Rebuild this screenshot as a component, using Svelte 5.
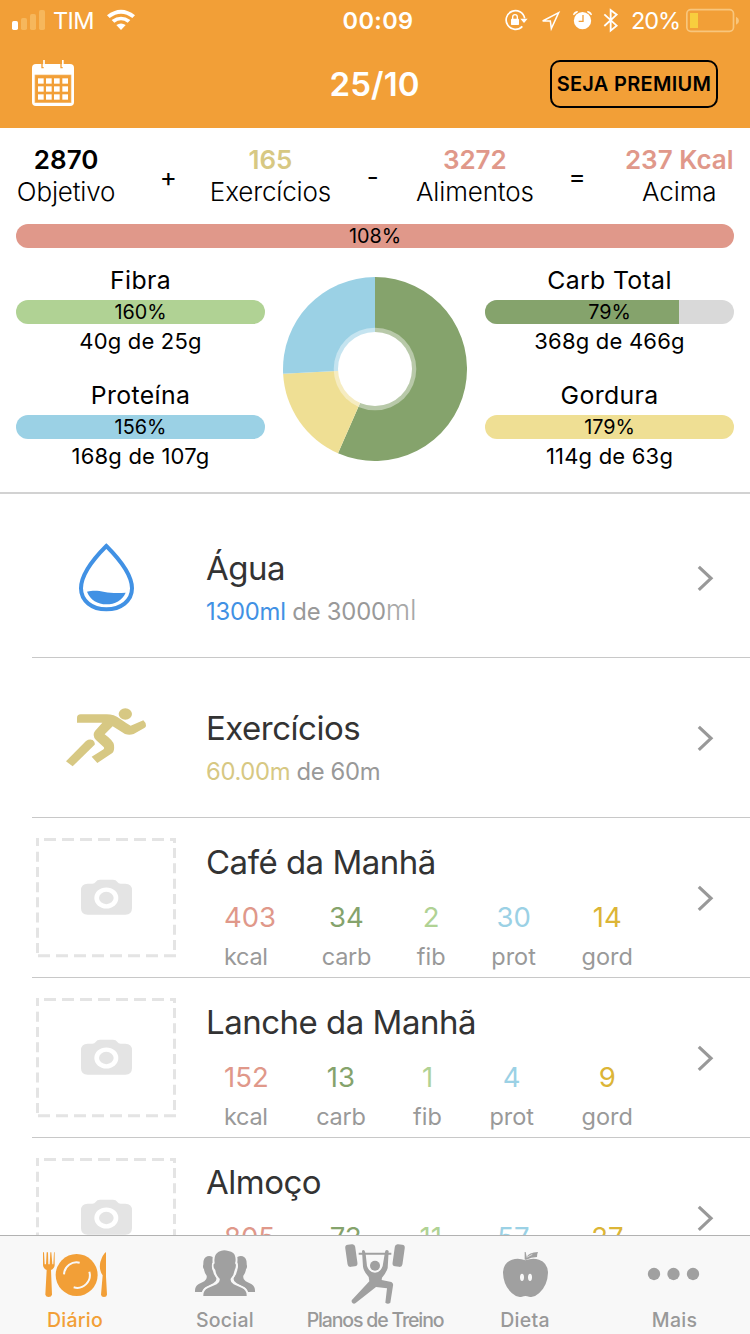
<script>
  const macrosLeft = [
    { name: 'Fibra', pct: 160, fill: 100, text: '40g de 25g', color: '#b0d294' },
    { name: 'Proteína', pct: 156, fill: 100, text: '168g de 107g', color: '#9bd1e5' }
  ];
  const macrosRight = [
    { name: 'Carb Total', pct: 79, fill: 78, text: '368g de 466g', color: '#85a36c' },
    { name: 'Gordura', pct: 179, fill: 100, text: '114g de 63g', color: '#efdf94' }
  ];
  const labels = ['kcal', 'carb', 'fib', 'prot', 'gord'];
  const meals = [
    { name: 'Café da Manhã', values: [403, 34, 2, 30, 14] },
    { name: 'Lanche da Manhã', values: [152, 13, 1, 4, 9] },
    { name: 'Almoço', values: [805, 73, 11, 57, 27] }
  ];
</script>

{#snippet chevron()}
  <svg class="chevron" viewBox="0 0 20 30" width="20" height="30"><path d="M2.800 3.800 15 15.300 2.800 26.800" fill="none" stroke="#999" stroke-width="3.200" /></svg>
{/snippet}

{#snippet macro(m)}
  <div class="macro">
    <div class="macro-name">{m.name}</div>
    <div class="bar">
      <div class="fill" style="width:{m.fill}%;background:{m.color}"></div>
      <span>{m.pct}%</span>
    </div>
    <div class="macro-text">{m.text}</div>
  </div>
{/snippet}

<div class="screen">
  <header>
    <div class="status">
      <div class="left">
        <svg viewBox="0 0 150 120" width="50" height="40">
          <rect x="36" y="63" width="18" height="27" rx="5" fill="#fff" />
          <g fill="#f6b75c"><rect x="63" y="54" width="18" height="36" rx="5" /><rect x="90" y="42" width="18" height="48" rx="5" /><rect x="117" y="30" width="18" height="60" rx="5" /></g>
        </svg>
        <span class="carrier">TIM</span>
        <svg viewBox="291 0 135 120" width="45" height="40" fill="#fff">
          <path d="M321 46 Q363 13 405 46 L397 54 Q363 28 329 54Z" />
          <path d="M335 60 Q363 40 391 60 L383 68 Q363 54 343 68Z" />
          <path d="M349 75 Q363 66 377 75 L363 90Z" />
        </svg>
      </div>
      <span class="time">00:09</span>
      <div class="right">
        <svg viewBox="30 0 111 120" width="37" height="40">
          <path d="M104 55 A28 28 0 1 0 97 79" fill="none" stroke="#fff" stroke-width="5" />
          <path d="M91 56 H113 L102 69Z" fill="#fff" />
          <rect x="63" y="56" width="24" height="19" rx="2" fill="#fff" />
          <path d="M68 57 V51 Q68 44 75 44 T82 51 V57" fill="none" stroke="#fff" stroke-width="4" />
        </svg>
        <svg viewBox="141 0 96 120" width="32" height="40"><path d="M158 63 L206 38 L184 86 L181 63Z" fill="none" stroke="#fff" stroke-width="4.500" /></svg>
        <svg viewBox="237 0 90 120" width="30" height="40">
          <circle cx="277.500" cy="62" r="26" fill="#fff" />
          <path d="M249 44 Q252 33 264 33 L262 38 Q256 40 252 46Z M306 44 Q303 33 291 33 L293 38 Q299 40 303 46Z" fill="#fff" />
          <path d="M279 45 V64 H266" fill="none" stroke="#f29f37" stroke-width="4" />
        </svg>
        <svg viewBox="327 0 72 120" width="24" height="40"><path d="M343 43 L380 77 L362 92 V30 L380 44 L343 78" fill="none" stroke="#fff" stroke-width="5.500" /></svg>
        <span class="pct">20%</span>
        <svg viewBox="585 0 165 120" width="55" height="40">
          <rect x="590.500" y="29" width="140" height="65" rx="12" fill="none" stroke="#f8c67d" stroke-width="5" />
          <path d="M738 50 Q747 54 747 62 T738 74Z" fill="#f8c67d" />
          <rect x="600" y="39" width="24" height="45" fill="#f8ce3e" />
        </svg>
      </div>
    </div>
    <div class="nav">
      <svg viewBox="96 120 126 264" width="42" height="88">
        <path d="M108 192 H210 Q222 192 222 204 V306 Q222 318 210 318 H108 Q96 318 96 306 V204 Q96 192 108 192Z" fill="#fff" />
        <rect x="105" y="225" width="108" height="83" fill="#f29f37" stroke="#f6b866" stroke-width="2" />
        <path d="M126 190 V203 H131 M183 190 V203 H188" stroke="#f29f37" stroke-width="4" fill="none" />
        <path d="M132 180 V200 M188.500 180 V200" stroke="#fff" stroke-width="5" />
        {#each [235, 259, 283] as y}
          {#each [114, 138, 162, 187] as x}
            <rect {x} {y} width="17" height="16" fill="#fff" />
          {/each}
        {/each}
      </svg>
      <h1>25/10</h1>
      <button>SEJA PREMIUM</button>
    </div>
  </header>

  <section class="summary">
    <div class="equation">
      <div class="term"><b>2870</b><span>Objetivo</span></div>
      <i>+</i>
      <div class="term gold"><b>165</b><span>Exercícios</span></div>
      <i>-</i>
      <div class="term red"><b>3272</b><span>Alimentos</span></div>
      <i>=</i>
      <div class="term red"><b>237 Kcal</b><span>Acima</span></div>
    </div>
    <div class="bar total"><div class="fill" style="width:100%;background:#e0988a"></div><span>108%</span></div>
    <div class="macros">
      <div>{#each macrosLeft as m}{@render macro(m)}{/each}</div>
      <svg class="donut" viewBox="-92 -92 184 184" width="184" height="184">
        <path d="M0 0 V-92 A92 92 0 1 1 -36.980 84.240Z" fill="#85a36c" />
        <path d="M0 0 L-36.980 84.240 A92 92 0 0 1 -91.880 4.650Z" fill="#efdf94" />
        <path d="M0 0 L-91.880 4.650 A92 92 0 0 1 0 -92Z" fill="#9bd1e5" />
        <circle r="41.300" fill="#fff" fill-opacity=".42" />
        <circle r="37" fill="#fff" />
      </svg>
      <div>{#each macrosRight as m}{@render macro(m)}{/each}</div>
    </div>
  </section>

  <main>
    <div class="row">
      <svg viewBox="-120 -66 621 477" width="207" height="159">
        <path d="M199 78 C178 99 123 156 123 205 C123 243 156 268 199 268 S276 243 276 205 C276 156 220 99 199 78Z" fill="none" stroke="#4191e4" stroke-width="12" />
        <path d="M141 215 C180 205 195 224 257 218 C247 241 225 253 199 253 S151 240 141 215Z" fill="#4191e4" />
      </svg>
      <div class="body">
        <h2>Água</h2>
        <p><span class="blue">1300ml</span> de 3000<span class="unit">ml</span></p>
      </div>
      {@render chevron()}
    </div>
    <div class="row">
      <svg viewBox="-120 -96 621 477" width="207" height="159" fill="#d7c883">
        <ellipse cx="256" cy="72" rx="20" ry="17.500" />
        <path d="M111 98 V84 Q111 73 122 73 H200 Q222 73 240 86 Q258 99 272 107 L310 91 Q318 98 318 107 Q318 111 313 114 L281 132 Q268 137 255 132 L218 109 L194 133 Q220 152 222 165 Q224 183 217 189 L172 219 L155 200 L186 181 Q195 176 191 171 L168 150 Q155 136 165 123 L187 98Z" />
        <path d="M78 214 L138 153 Q148 146 158 150 Q166 157 164 164 L98 229Z" />
      </svg>
      <div class="body">
        <h2>Exercícios</h2>
        <p class="ex"><span class="gold-text">60.00m</span> de 60m</p>
      </div>
      {@render chevron()}
    </div>
    {#each meals as meal}
      <div class="row meal">
        <svg viewBox="-60 -6 621 477" width="207" height="159">
          <g stroke="#e4e4e4" stroke-width="9" fill="none">
            <path d="M72 58.500 H468 M54 407.500 H468" stroke-dasharray="36 18" />
            <path d="M52.500 95 V411" stroke-dasharray="30 15.700" />
            <path d="M463.500 84 V411" stroke-dasharray="30 16" />
            <path d="M52.500 54 V78 M463.500 54 V69" />
          </g>
          <path d="M203 191 H217 Q224 191 227 186 Q231 179 240 179 H279 Q288 179 292 186 Q295 191 302 191 H316 Q336 191 336 211 V264 Q336 284 316 284 H203 Q183 284 183 264 V211 Q183 191 203 191Z" fill="#e4e4e4" />
          <ellipse cx="259" cy="234" rx="36" ry="31.500" fill="#fff" />
          <ellipse cx="259" cy="234" rx="22" ry="18.500" fill="#e4e4e4" />
        </svg>
        <div class="body">
          <h2>{meal.name}</h2>
          <div class="nutrients">
            {#each meal.values as v, i}
              <div class="nutrient {labels[i]}"><strong>{v}</strong><small>{labels[i]}</small></div>
            {/each}
          </div>
        </div>
        {@render chevron()}
      </div>
    {/each}
  </main>

  <footer>
    <div class="tab active">
      <svg viewBox="0 60 450 180" width="150" height="60">
        <circle cx="230" cy="165" r="63" fill="#f29f37" />
        <path d="M192 163 A38 38 0 0 1 239 128 M268 155 A38 38 0 0 1 221 202" fill="none" stroke="#f8f8f8" stroke-width="6" />
        <path d="M129 97 H132 L134 133 H138 L140 97 H144 L145 133 H149 L151 97 H154 L157 133 H160 L162 97 H164 V136 Q163 146 153 150 L156 224 Q154 231 146 231 T136 224 L140 150 Q130 146 129 136Z" fill="#f29f37" />
        <path d="M318 96 V170 L321 224 Q320 231 312 231 T303 224 L308 166 Q296 150 301 126 Q308 103 318 96Z" fill="#f29f37" />
      </svg>
      <span>Diário</span>
    </div>
    <div class="tab">
      <svg viewBox="450 60 450 180" width="150" height="60" fill="#a0a0a0">
        <path d="M638 111 Q630 107 622 109 Q609 114 610 133 Q607 143 612 148 Q613 158 620 167 Q622 178 613 184 L595 193 Q584 200 585 216 H606 Q610 203 624 198 L640 190 Q651 184 649 174 Q640 164 638 149 Q634 138 638 127Z" />
        <path d="M712 111 Q720 107 728 109 Q741 114 740 133 Q743 143 738 148 Q737 158 730 167 Q728 178 737 184 L755 193 Q766 200 765 216 H744 Q740 203 726 198 L710 190 Q699 184 701 174 Q710 164 712 149 Q716 138 712 127Z" />
        <path stroke="#f8f8f8" stroke-width="10" paint-order="stroke" d="M610 228 Q609 211 624 204 L650 193 Q661 187 659 176 Q648 166 646 150 Q639 146 641 133 L644 130 Q640 104 656 95 Q670 87 685 93 Q704 95 706 112 Q708 122 705 130 Q711 134 704 150 Q702 166 692 176 Q690 187 701 193 L726 204 Q741 211 740 228Z" />
      </svg>
      <span>Social</span>
    </div>
    <div class="tab">
      <svg viewBox="60 60 450 180" width="150" height="60" fill="#a0a0a0">
        <rect x="199" y="73" width="30" height="67" rx="9" transform="rotate(-8 214.500 106)" />
        <rect x="341" y="73" width="30" height="67" rx="9" transform="rotate(8 355.500 106)" />
        <path d="M236 98 H334 V104 H236Z" />
        <circle cx="285" cy="137" r="15" />
        <path d="M246 93 Q249 88 254 92 L257 102 L261 138 Q268 158 285 158 Q301 158 308 138 L314 102 L316 92 Q321 88 326 93 L323 144 Q319 158 306 173 L305 180 L334 186 Q341 190 339 197 L331 248 Q324 254 316 248 L321 205 L288 201 L227 249 Q220 254 215 246 V241 L268 184 L266 171 Q251 155 249 140Z" />
      </svg>
      <span class="tight">Planos de Treino</span>
    </div>
    <div class="tab">
      <svg viewBox="510 60 450 180" width="150" height="60" fill="#a0a0a0">
        <path d="M736 121 Q757 113 777 119 Q803 128 804 158 Q803 196 777 220 Q762 234 747 230 Q736 226 726 230 Q711 234 696 220 Q670 196 669 158 Q670 128 696 119 Q716 113 736 121Z" />
        <path d="M734 96 H737 L740 111 Q746 97 774 96 Q771 101 771 111 Q753 112 739 119 H734Z" />
        <path d="M740 112 L757 103" stroke="#f8f8f8" stroke-width="2" />
        <ellipse cx="726" cy="172" rx="6" ry="11" fill="#f8f8f8" /><ellipse cx="750" cy="172" rx="6" ry="11" fill="#f8f8f8" />
      </svg>
      <span>Dieta</span>
    </div>
    <div class="tab">
      <svg viewBox="360 120 450 180" width="150" height="60" fill="#a0a0a0"><circle cx="522" cy="222" r="18.500" /><circle cx="580.500" cy="222" r="18.500" /><circle cx="639" cy="222" r="18.500" /></svg>
      <span class="more">Mais</span>
    </div>
  </footer>
</div>

<style>
  :global(body) { margin: 0; background: #fff; }
  .screen { width: 750px; height: 1334px; display: flex; flex-direction: column; overflow: hidden; background: #fff; color: #000; font-family: Inter, 'Liberation Sans', sans-serif; white-space: nowrap; }
  svg { display: block; flex: none; }
  header { height: 128px; flex: none; background: #f29f37; }
  .status { height: 40px; display: grid; grid-template-columns: 300px 156px 294px; color: #fff; line-height: 41px; }
  .left, .right { display: flex; }
  .right { justify-content: flex-end; padding-right: 10px; }
  .carrier { width: 47px; text-align: center; font-size: 23.500px; font-weight: 400; letter-spacing: -.5px; }
  .time { text-align: center; font-size: 23.500px; font-weight: 600; letter-spacing: .4px; }
  .pct { box-sizing: border-box; width: 62px; padding-left: 3px; text-align: center; font-size: 23.500px; font-weight: 400; letter-spacing: -1px; }
  .nav { height: 88px; display: grid; grid-template-columns: 42px 1fr 168px; align-items: center; padding: 0 32px; }
  h1 { margin: 0 0 0 255.500px; color: #fff; font-size: 33px; line-height: 88px; font-weight: 600; letter-spacing: .15px; }
  button { box-sizing: border-box; width: 168px; height: 48px; padding: 0; border: 2px solid #000; border-radius: 10px; background: none; color: #000; font: 600 20px/44px Inter, sans-serif; letter-spacing: .3px; display: flex; justify-content: center; }

  .summary { box-sizing: border-box; height: 366px; flex: none; border-bottom: 2px solid #d2d2d2; padding-top: 16px; }
  .equation { display: grid; grid-template-columns: repeat(7, 102.200px); padding-left: 15px; height: 80px; }
  .term { display: flex; flex-direction: column; align-items: center; line-height: 32px; }
  .term b { font-size: 26px; font-weight: 600; }
  .term span { font-size: 26px; font-weight: 300; color: #000; letter-spacing: -.15px; }
  .gold b { color: #d7c883; }
  .red b { color: #e0988a; }
  .equation i { font-style: normal; text-align: center; font-size: 26px; line-height: 65px; }
  .bar { height: 24px; border-radius: 12px; overflow: hidden; background: #d9d9d9; display: grid; }
  .bar > * { grid-area: 1 / 1; }
  .bar span { text-align: center; font-size: 19.800px; line-height: 24px; }
  .total { margin: 0 16px; }
  .macros { display: grid; grid-template-columns: 249px 184px 249px; justify-content: space-between; padding: 16px 16px 0; }
  .donut { margin-top: 13px; }
  .macro { height: 115px; text-align: center; }
  .macro-name { font-size: 24.800px; line-height: 33px; height: 36px; letter-spacing: .35px; }
  .macro-text { font-size: 22px; line-height: 35px; letter-spacing: .2px; }

  main { flex: 1; min-height: 0; overflow: hidden; padding-top: 4px; }
  .row { box-sizing: border-box; height: 160px; display: flex; align-items: flex-start; background: linear-gradient(#c8c8c8, #c8c8c8) 32px 159px / 718px 1px no-repeat; }
  .body { width: 489px; }
  h2 { margin: 0 0 0 -1px; font-size: 33px; font-weight: 400; line-height: 44px; padding-top: 48px; color: #333; letter-spacing: -.5px; }
  p { margin: 0 0 0 -1px; font-size: 23.800px; font-weight: 400; line-height: 44px; color: #999; letter-spacing: -.2px; }
  .ex { letter-spacing: -.35px; }
  .blue { color: #4191e4; }
  .gold-text { color: #d7c883; }
  .unit { font-size: 28px; line-height: 20px; font-weight: 300; color: #a8a8a8; }
  .chevron { margin-top: 65px; }
  .meal h2 { padding-top: 22px; }
  .nutrients { display: flex; justify-content: space-between; width: 409px; margin-left: 17px; padding-top: 13px; }
  .nutrient { display: flex; flex-direction: column; align-items: center; line-height: 40px; }
  .nutrient.kcal { align-items: flex-start; }
  strong { font-size: 27.500px; font-weight: 400; }
  small { font-size: 23.500px; font-weight: 400; color: #999; }
  .kcal strong { color: #e0988a; }
  .carb strong { color: #85a36c; }
  .fib strong { color: #b0d294; }
  .prot strong { color: #9bd1e5; }
  .gord strong { color: #dcb536; }
  .kcal small { letter-spacing: -.3px; }
  .carb small { letter-spacing: -.3px; }

  footer { box-sizing: border-box; height: 99px; flex: none; display: grid; grid-template-columns: repeat(5, 150px); border-top: 1px solid #b2b2b2; background: #f8f8f8; }
  .tab { padding-top: 4px; text-align: center; color: #999; font-size: 19.500px; font-weight: 500; line-height: 40px; letter-spacing: .25px; }
  .tab svg { overflow: visible; }
  .tab .tight { letter-spacing: -1.150px; }
  .tab .more { padding-right: 1px; }
  .active { color: #f29f37; }
</style>
